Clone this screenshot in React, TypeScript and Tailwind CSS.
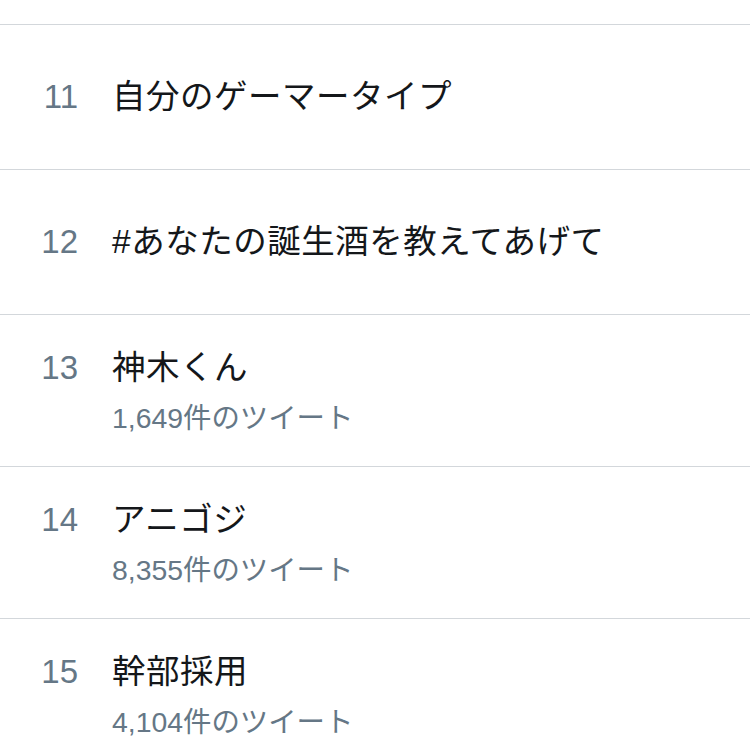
import React from "react";

type Item = { rank: number; title: string; count?: string };

const items: Item[] = [
  { rank: 11, title: "自分のゲーマータイプ" },
  { rank: 12, title: "#あなたの誕生酒を教えてあげて" },
  { rank: 13, title: "神木くん", count: "1,649件のツイート" },
  { rank: 14, title: "アニゴジ", count: "8,355件のツイート" },
  { rank: 15, title: "幹部採用", count: "4,104件のツイート" },
];

const font = { fontFamily: "'Liberation Sans', 'Noto Sans CJK JP', sans-serif" };

export default function App() {
  return (
    <div className="w-[750px] h-[752px] overflow-hidden bg-white" style={font}>
      <div className="h-[25px] border-b border-[#d3d7db]" />
      {items.map((it) =>
        it.count ? (
          <div key={it.rank} className="h-[152px] border-b border-[#d3d7db] flex pt-[33px]">
            <div className="w-[78px] text-right text-[33px] leading-[40px] text-[#657786]">{it.rank}</div>
            <div className="ml-[34px] flex flex-col">
              <div className="text-[33.5px] tracking-[0.5px] leading-[40px] text-[#14171a]">{it.title}</div>
              <div className="mt-[13px] text-[28.4px] leading-[34px] text-[#657786]">{it.count}</div>
            </div>
          </div>
        ) : (
          <div key={it.rank} className="h-[145px] border-b border-[#d3d7db] flex items-center">
            <div className="w-[78px] text-right text-[33px] leading-[40px] text-[#657786]">{it.rank}</div>
            <div className="ml-[34px] text-[33.5px] tracking-[0.5px] leading-[40px] text-[#14171a]">{it.title}</div>
          </div>
        )
      )}
    </div>
  );
}
